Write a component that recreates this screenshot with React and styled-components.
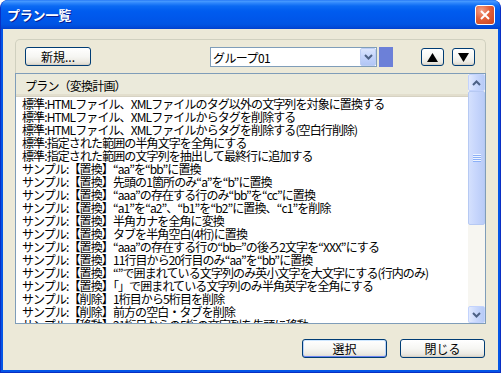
import React from 'react'
import styled, { createGlobalStyle } from 'styled-components'

const GlobalStyle = createGlobalStyle`
  html, body {
    margin: 0;
    padding: 0;
    background: #ffffff;
  }
  body {
    font-family: "Noto Sans CJK JP", "Noto Sans", sans-serif;
    font-size: 12px;
    color: #000;
  }
`

const Window = styled.div`
  width: 501px;
  height: 373px;
  box-sizing: border-box;
  display: flex;
  flex-direction: column;
  background: #0455e6;
  border: 1px solid #0a2fc4;
  border-top: none;
  border-radius: 8px 8px 0 0;
  overflow: hidden;
`

const TitleBar = styled.div`
  height: 29px;
  flex: none;
  display: flex;
  align-items: center;
  justify-content: space-between;
  padding: 0 5px 0 6px;
  background: linear-gradient(
    to bottom,
    #1a6cf2 0px,
    #4a9cff 1px,
    #2e86fb 3px,
    #0b6af3 6px,
    #005cef 11px,
    #0057eb 18px,
    #0055e4 24px,
    #014bd9 27px,
    #0040cc 29px
  );
`

const TitleText = styled.span`
  color: #fff;
  font-weight: 700;
  font-size: 13px;
  letter-spacing: -0.2px;
  text-shadow: 1px 1px 0 #0a1f8f;
`

const CloseBox = styled.button`
  width: 20px;
  height: 20px;
  padding: 0;
  border: 1px solid #fff;
  border-radius: 3px;
  background: radial-gradient(circle at 30% 25%, #f3a189 0%, #e2603a 45%, #c8441f 100%);
  display: flex;
  align-items: center;
  justify-content: center;
`

const Client = styled.div`
  flex: 1;
  margin: 0 2px 2px 2px;
  background: #ece9d8;
  display: flex;
  flex-direction: column;
  padding: 10px 12px 0 12px;
`

const GroupBox = styled.div`
  border: 1px solid #d0d0bf;
  border-bottom: none;
  border-radius: 5px 5px 0 0;
  padding: 7px 10px 6px 9px;
  display: flex;
  align-items: flex-start;
`

const XpButton = styled.button`
  width: ${(p) => p.$w || 85}px;
  height: ${(p) => p.$h || 19}px;
  margin-top: ${(p) => p.$top || 0}px;
  padding: 0;
  border: 1px solid #003c74;
  border-radius: 3px;
  font-family: "Noto Sans CJK JP", "Noto Sans", sans-serif;
  font-size: 12px;
  line-height: 1;
  color: #000;
  display: flex;
  align-items: center;
  justify-content: center;
  background: linear-gradient(to bottom, #ffffff 0%, #f6f6f3 50%, #eceae3 80%, #dcd8cd 100%);
  box-shadow: ${(p) =>
    p.$default
      ? 'inset 0 1px 0 #cee7ff, inset 0 -1px 0 #6982ee, inset 1px 0 0 #b8d2fb, inset -1px 0 0 #b8d2fb'
      : 'inset 0 -1px 0 #d6d0c5'};
`

const Combo = styled.div`
  width: 167px;
  height: 20px;
  box-sizing: border-box;
  margin-left: 119px;
  border: 1px solid #7f9db9;
  background: #fff;
  display: flex;
  align-items: center;
  justify-content: space-between;
  padding-left: 2px;
`

const ComboText = styled.span`
  letter-spacing: -0.6px;
`

const ComboArrow = styled.div`
  width: 16px;
  height: 18px;
  box-sizing: border-box;
  border: 1px solid #bccdf4;
  border-radius: 2px;
  background: linear-gradient(to bottom, #dbe5fd 0%, #c3d3fb 50%, #b2c6f5 100%);
  display: flex;
  align-items: center;
  justify-content: center;
`

const Swatch = styled.div`
  width: 14px;
  height: 20px;
  margin-left: 2px;
  background: #6c80d8;
`

const ArrowGroup = styled.div`
  margin-left: auto;
  display: flex;
  gap: 8px;
`

const ListBox = styled.div`
  height: 251px;
  box-sizing: border-box;
  border: 1px solid #7f9db9;
  background: #fff;
  display: flex;
`

const ListMain = styled.div`
  flex: 1;
  min-width: 0;
  display: flex;
  flex-direction: column;
  overflow: hidden;
`

const Header = styled.div`
  height: 23px;
  flex: none;
  box-sizing: border-box;
  padding-left: 9px;
  display: flex;
  align-items: center;
  background: #ebeadb;
  border-bottom: 1px solid #d6d2c2;
  box-shadow: inset 0 -2px 0 #e2decd;
  letter-spacing: -0.8px;
`

const Row = styled.div`
  height: 13px;
  flex: none;
  line-height: 13px;
  padding-left: 6px;
  white-space: nowrap;
  letter-spacing: -0.9px;
`

const ScrollBar = styled.div`
  width: 17px;
  flex: none;
  display: flex;
  flex-direction: column;
  background: #f7f6f1;
`

const ScrollButton = styled.div`
  height: 17px;
  flex: none;
  box-sizing: border-box;
  border: 1px solid #c3d3fd;
  border-radius: 2px;
  background: linear-gradient(to right, #e2eafe 0%, #c9d8fc 50%, #b6caf6 100%);
  display: flex;
  align-items: center;
  justify-content: center;
`

const Thumb = styled.div`
  height: 134px;
  flex: none;
  box-sizing: border-box;
  border: 1px solid #b6c9f3;
  border-radius: 2px;
  background: linear-gradient(to right, #d4e0fd 0%, #c6d5fc 50%, #b9ccf7 100%);
  display: flex;
  align-items: center;
  justify-content: center;
`

const Grip = styled.div`
  width: 8px;
  height: 8px;
  background: repeating-linear-gradient(to bottom, #eef4fe 0px, #eef4fe 1px, #8cb0f8 1px, #8cb0f8 2px);
`

const Track = styled.div`
  flex: 1;
`

const Footer = styled.div`
  display: flex;
  justify-content: flex-end;
  gap: 13px;
  margin-top: 15px;
  padding-right: 1px;
`

const Chevron = ({ up }) => (
  <svg width="9" height="6" viewBox="0 0 9 6">
    <path
      d={up ? 'M1 5 L4.5 1.5 L8 5' : 'M1 1 L4.5 4.5 L8 1'}
      fill="none"
      stroke="#4d6185"
      strokeWidth="2"
    />
  </svg>
)

const Triangle = ({ up }) => (
  <svg width="11" height="9" viewBox="0 0 11 9">
    <polygon points={up ? '5.5,0 11,9 0,9' : '0,0 11,0 5.5,9'} fill="#000" />
  </svg>
)

const plans = [
  '標準:HTMLファイル、XMLファイルのタグ以外の文字列を対象に置換する',
  '標準:HTMLファイル、XMLファイルからタグを削除する',
  '標準:HTMLファイル、XMLファイルからタグを削除する(空白行削除)',
  '標準:指定された範囲の半角文字を全角にする',
  '標準:指定された範囲の文字列を抽出して最終行に追加する',
  'サンプル:【置換】“aa”を“bb”に置換',
  'サンプル:【置換】先頭の1箇所のみ“a”を“b”に置換',
  'サンプル:【置換】“aaa”の存在する行のみ“bb”を“cc”に置換',
  'サンプル:【置換】“a1”を“a2”、“b1”を“b2”に置換、“c1”を削除',
  'サンプル:【置換】半角カナを全角に変換',
  'サンプル:【置換】タブを半角空白(4桁)に置換',
  'サンプル:【置換】“aaa”の存在する行の“bb=”の後ろ2文字を“XXX”にする',
  'サンプル:【置換】11行目から20行目のみ“aa”を“bb”に置換',
  'サンプル:【置換】“”で囲まれている文字列のみ英小文字を大文字にする(行内のみ)',
  'サンプル:【置換】「」で囲まれている文字列のみ半角英字を全角にする',
  'サンプル:【削除】1桁目から5桁目を削除',
  'サンプル:【削除】前方の空白・タブを削除',
  'サンプル:【移動】21桁目からの5桁の文字列を先頭に移動',
]

export default function App() {
  return (
    <>
      <GlobalStyle />
      <Window>
        <TitleBar>
          <TitleText>プラン一覧</TitleText>
          <CloseBox type="button" aria-label="close">
            <svg width="10" height="10" viewBox="0 0 10 10">
              <path d="M1 1 L9 9 M9 1 L1 9" stroke="#fff" strokeWidth="2" />
            </svg>
          </CloseBox>
        </TitleBar>
        <Client>
          <GroupBox>
            <XpButton type="button" $w={66}>新規...</XpButton>
            <Combo>
              <ComboText>グループ01</ComboText>
              <ComboArrow>
                <Chevron />
              </ComboArrow>
            </Combo>
            <Swatch />
            <ArrowGroup>
              <XpButton type="button" $w={23} $h={18} $top={1}>
                <Triangle up />
              </XpButton>
              <XpButton type="button" $w={23} $h={18} $top={1}>
                <Triangle />
              </XpButton>
            </ArrowGroup>
          </GroupBox>
          <ListBox>
            <ListMain>
              <Header>プラン（変換計画）</Header>
              {plans.map((p) => (
                <Row key={p}>{p}</Row>
              ))}
            </ListMain>
            <ScrollBar>
              <ScrollButton>
                <Chevron up />
              </ScrollButton>
              <Thumb>
                <Grip />
              </Thumb>
              <Track />
              <ScrollButton>
                <Chevron />
              </ScrollButton>
            </ScrollBar>
          </ListBox>
          <Footer>
            <XpButton type="button" $default>選択</XpButton>
            <XpButton type="button">閉じる</XpButton>
          </Footer>
        </Client>
      </Window>
    </>
  )
}
